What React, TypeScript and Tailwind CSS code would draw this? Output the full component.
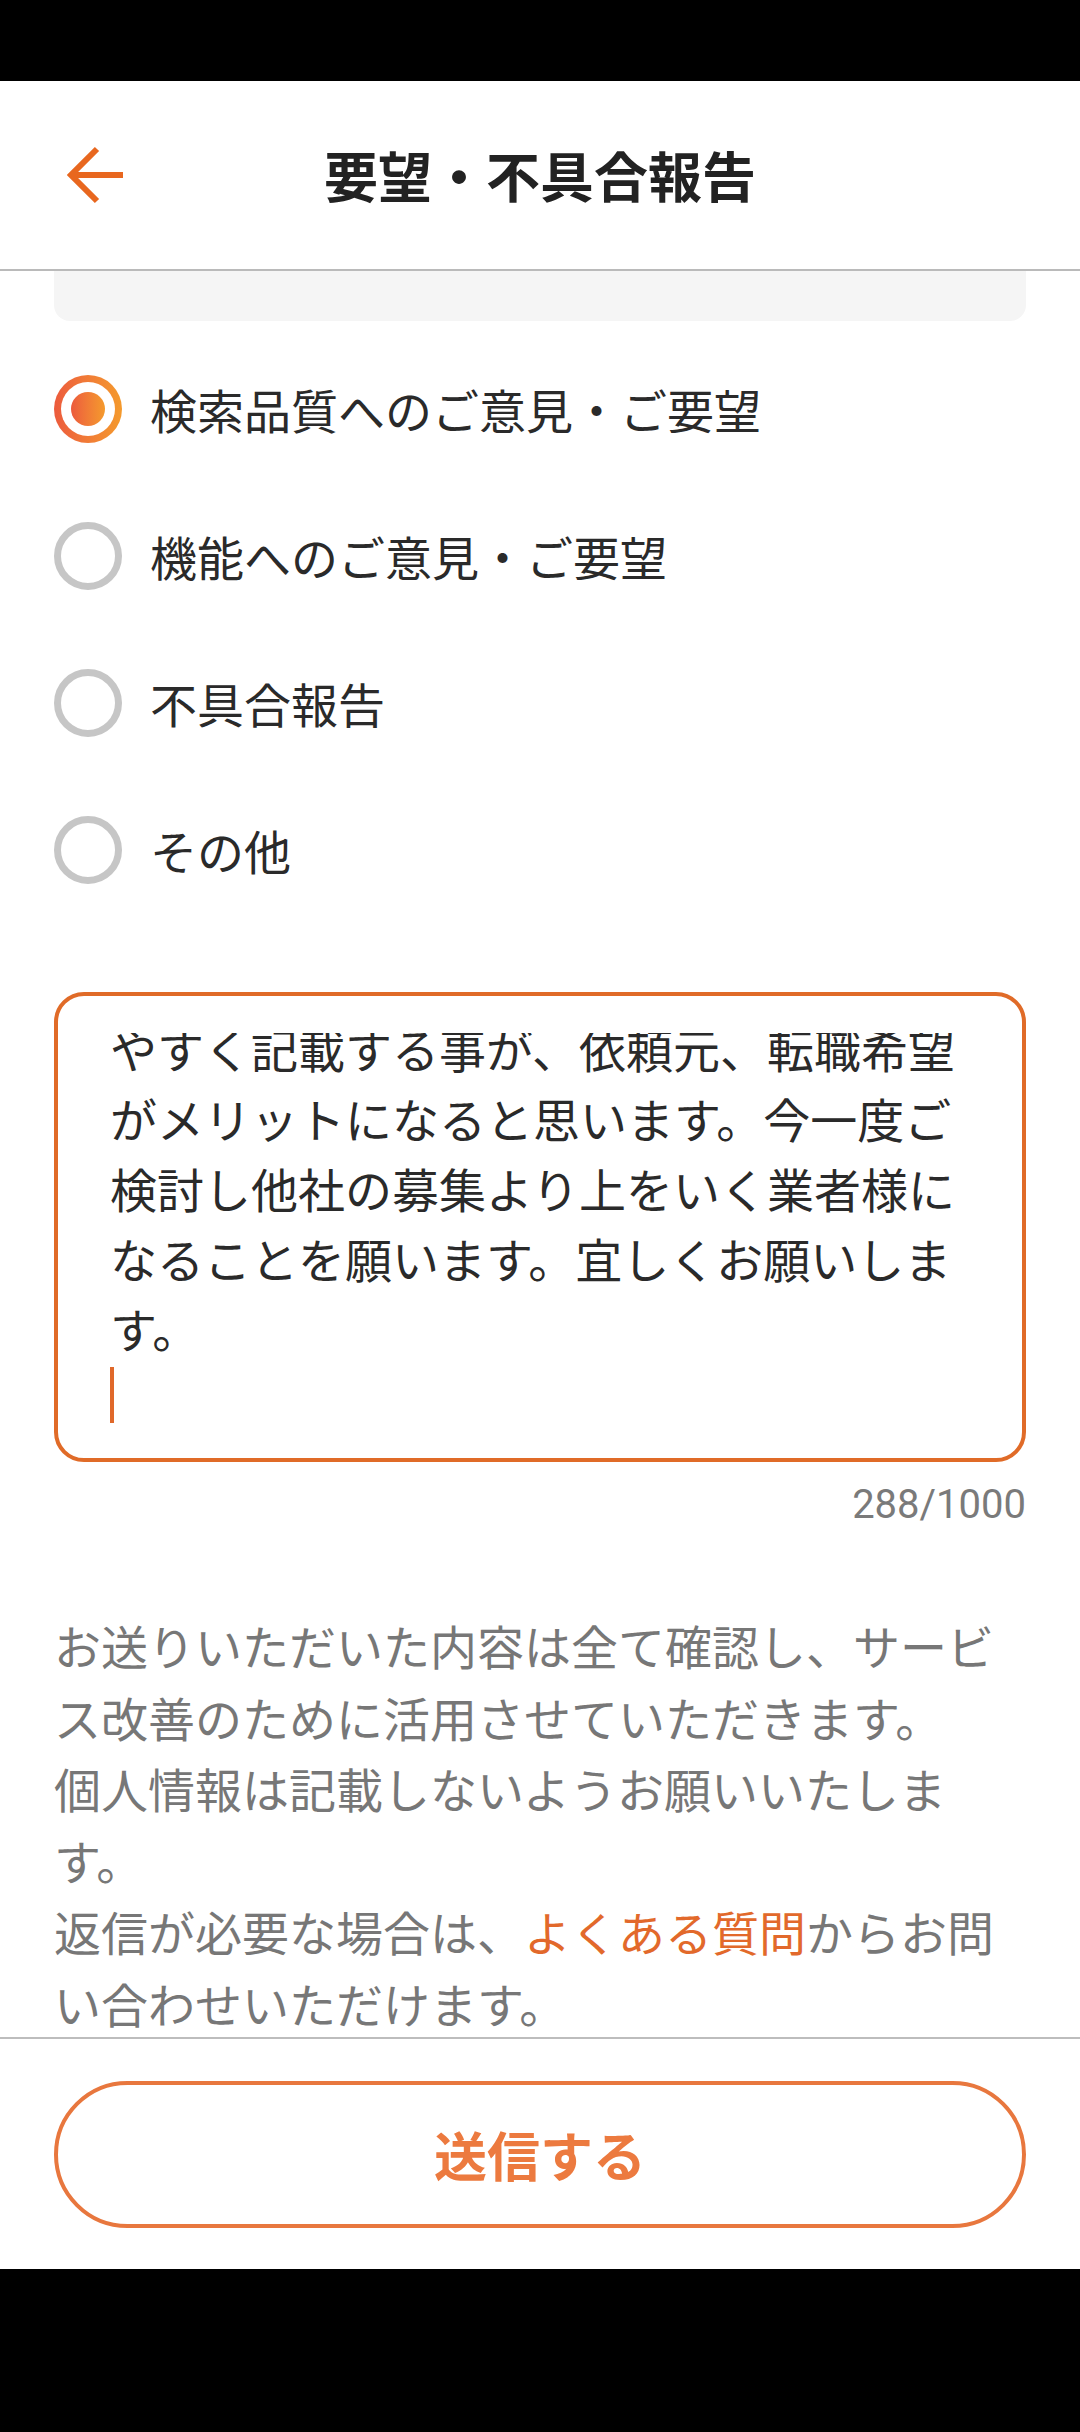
import React from "react";

const options = [
  "検索品質へのご意見・ご要望",
  "機能へのご意見・ご要望",
  "不具合報告",
  "その他",
];

function Radio({ checked }: { checked: boolean }) {
  if (checked) {
    return (
      <div className="w-[68px] h-[68px] shrink-0 rounded-full bg-linear-to-r from-[#ec5a3c] to-[#f49a2c] p-[7px]">
        <div className="w-full h-full rounded-full bg-white flex items-center justify-center">
          <div className="w-[34px] h-[34px] rounded-full bg-linear-to-r from-[#ec5a3c] to-[#f49a2c]" />
        </div>
      </div>
    );
  }
  return <div className="w-[68px] h-[68px] shrink-0 rounded-full border-[7px] border-[#c6c6c6]" />;
}

export default function App() {
  return (
    <div className="w-[1080px] h-[2432px] flex flex-col bg-white font-['Noto_Sans_CJK_JP','Noto_Sans',sans-serif] text-[#2a2a2a]">
      {/* status bar */}
      <div className="h-[81px] shrink-0 bg-black" />

      {/* header */}
      <header className="h-[188px] shrink-0 grid grid-cols-[1fr_auto_1fr] items-center">
        <div className="pl-[66px] flex items-center">
          <svg width="60" height="60" viewBox="0 0 60 60" fill="none">
            <path d="M57 30H5M31 4L5 30L31 56" stroke="#e8671f" strokeWidth="6" />
          </svg>
        </div>
        <h1 className="text-[54px] font-bold leading-none text-[#222]">要望・不具合報告</h1>
        <div />
      </header>
      <div className="h-[2px] shrink-0 bg-[#bababa]" />

      {/* scroll area */}
      <main className="h-[1766px] shrink-0 overflow-hidden px-[54px]">
        <div className="h-[50px] bg-[#f5f5f5] rounded-b-[16px]" />

        <div className="pt-[14px]">
          {options.map((label, i) => (
            <div key={label} className="h-[147px] flex items-center gap-[28px]">
              <Radio checked={i === 0} />
              <span className="text-[47px] leading-none">{label}</span>
            </div>
          ))}
        </div>

        <div className="mt-[69px] h-[470px] border-4 border-[#e06b28] rounded-[30px] pl-[52px] pr-[42px] pt-[37px]">
          <div className="h-[407px] overflow-hidden">
            <p className="-mt-[20px] text-[47px] leading-[70px] text-[#2a2a2a]">
              やすく記載する事が、依頼元、転職希望がメリットになると思います。今一度ご検討し他社の募集より上をいく業者様になることを願います。宜しくお願いします。
            </p>
            <div className="mt-[4px] w-[4px] h-[56px] bg-[#e0682a]" />
          </div>
        </div>

        <div className="mt-[20px] text-right font-['Roboto',sans-serif] text-[40px] leading-[46px] text-[#7a7a7a]">
          288/1000
        </div>

        <p className="mt-[81px] text-[47px] leading-[71.5px] text-[#777]">
          お送りいただいた内容は全て確認し、サービス改善のために活用させていただきます。
          <br />
          個人情報は記載しないようお願いいたします。
          <br />
          返信が必要な場合は、<span className="text-[#e2692b]">よくある質問</span>からお問い合わせいただけます。
        </p>
      </main>
      <div className="h-[2px] shrink-0 bg-[#bdbdbd]" />

      {/* footer */}
      <footer className="h-[230px] shrink-0 px-[54px] flex items-center">
        <button className="w-full h-[147px] rounded-full border-4 border-[#e8773e] bg-white text-[53px] font-bold text-[#ec7a3f] leading-none">
          送信する
        </button>
      </footer>

      <div className="flex-1 bg-black" />
    </div>
  );
}
